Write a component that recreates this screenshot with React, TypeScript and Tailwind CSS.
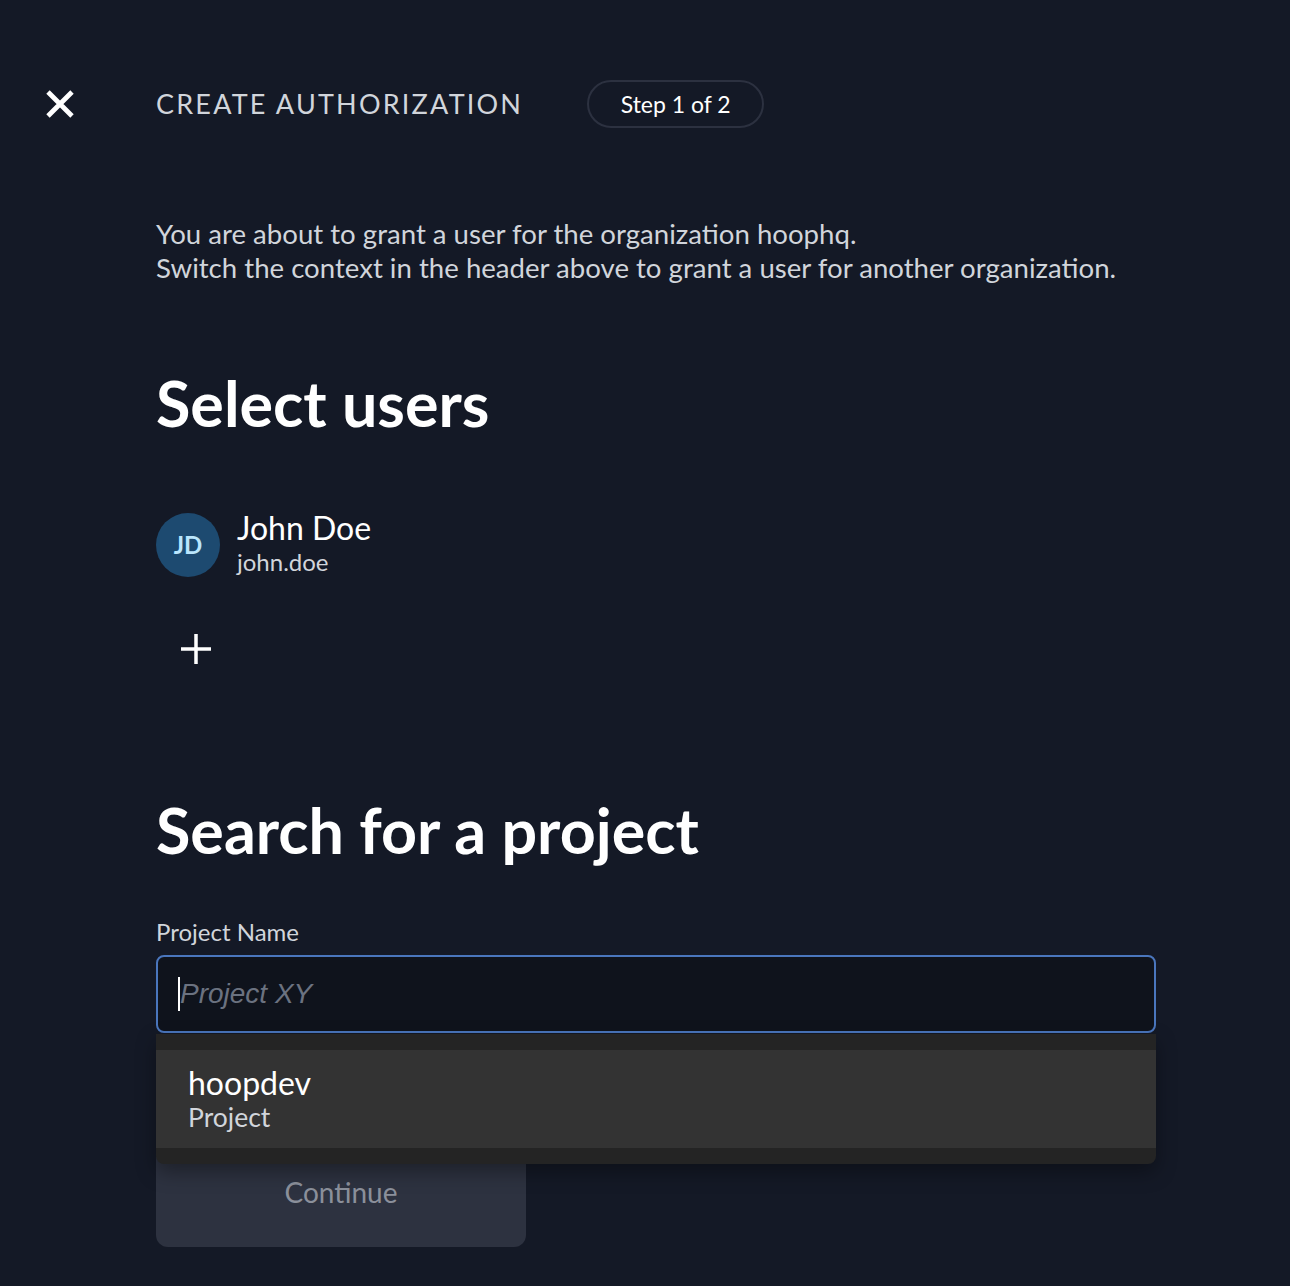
export default function App() {
  return (
    <div className="min-h-[1286px] w-full bg-[#141926] font-['Lato','Noto_Sans',sans-serif] text-white">
      {/* Header */}
      <div className="flex items-center pt-[80px]">
        <div className="ml-[45px] flex h-[48px] w-[30px] items-center">
          <svg width="30" height="30" viewBox="0 0 30 30" fill="none">
            <path d="M3 3L27 27M27 3L3 27" stroke="white" strokeWidth="4.8" strokeLinecap="butt" />
          </svg>
        </div>
        <h1 className="ml-[81px] text-[27px] tracking-[2.2px] text-[#d1d5db]">CREATE AUTHORIZATION</h1>
        <div className="ml-[64px] flex h-[48px] w-[177px] items-center justify-center rounded-full border-2 border-[#2c3140] text-[23px] text-white">
          Step 1 of 2
        </div>
      </div>

      <div className="pl-[156px]">
        <p className="mt-[89px] text-[27.6px] leading-[34px] text-[#d1d5db]">
          You are about to grant a user for the organization hoophq.
          <br />
          Switch the context in the header above to grant a user for another organization.
        </p>

        <h2 className="mt-[80px] text-[62.8px] font-bold leading-[76px]">Select users</h2>

        {/* User row */}
        <div className="mt-[70px] flex items-center gap-[17px]">
          <div className="flex h-[64px] w-[64px] items-center justify-center rounded-full bg-[#1d4a70] text-[24px] font-bold text-[#bae6fd]">
            JD
          </div>
          <div className="flex flex-col">
            <span className="text-[32px] leading-[34px]">John Doe</span>
            <span className="text-[24px] leading-[34px] text-[#d1d5db]">john.doe</span>
          </div>
        </div>

        <div className="mt-[50px] ml-[24px] flex h-[40px] w-[32px] items-center">
          <svg width="32" height="32" viewBox="0 0 32 32" fill="none">
            <path d="M16 1V31M1 16H31" stroke="white" strokeWidth="3.5" />
          </svg>
        </div>

        <h2 className="mt-[123px] text-[62.8px] font-bold leading-[76px]">Search for a project</h2>

        <label className="mt-[49px] block text-[24px] leading-[30px] text-[#d1d5db]">Project Name</label>

        {/* Search input + dropdown */}
        <div className="relative mt-[8px] w-[1000px]">
          <div className="flex h-[78px] items-center rounded-[8px] border-2 border-[#4a76bd] bg-[#0f131c] px-[20px]">
            <span className="h-[34px] w-[2px] bg-white" />
            <span className="font-['Liberation_Sans',sans-serif] text-[28px] italic text-[#6b7280]">Project XY</span>
          </div>

          <div className="absolute left-0 right-0 top-[79px] z-10 rounded-b-[8px] bg-[#242424] py-[16px] shadow-[0_8px_20px_rgba(0,0,0,0.35)]">
            <div className="flex flex-col bg-[#333333] px-[32px] py-[15px]">
              <span className="text-[32px] leading-[36px] text-white">hoopdev</span>
              <span className="text-[26.5px] leading-[32px] text-[#d1d5db]">Project</span>
            </div>
          </div>

          <button className="mt-[104px] flex h-[110px] w-[370px] items-center justify-center rounded-[12px] bg-[#2d3240] text-[28px] text-[#8b909b]">
            Continue
          </button>
        </div>
      </div>
    </div>
  );
}
